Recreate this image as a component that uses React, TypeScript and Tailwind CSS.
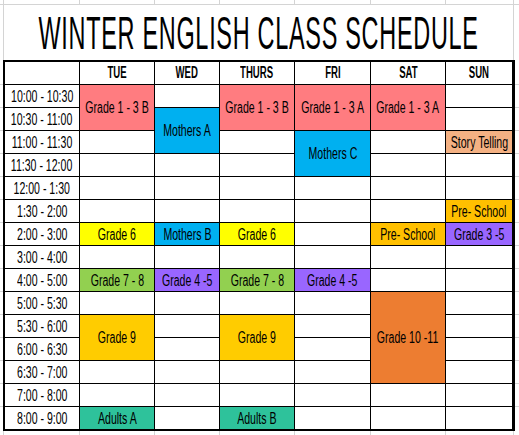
import React from "react";

type Cell = { t?: string; c?: string; s?: string };

const BG: Record<string, string> = {
  w: "bg-white",
  pink: "bg-[#ff7c80]",
  blue: "bg-[#00b0f0]",
  yel: "bg-[#ffff00]",
  grn: "bg-[#92d050]",
  pur: "bg-[#9966ff]",
  gold: "bg-[#ffcc00]",
  pre: "bg-[#ffc000]",
  teal: "bg-[#2ec29b]",
  org: "bg-[#ed7d31]",
  pch: "bg-[#f4b183]",
};

const W: Cell = { c: "w" };

const rows: { time: string; cells: Cell[] }[] = [
  {
    time: "10:00 - 10:30",
    cells: [
      { t: "Grade 1 - 3 B", c: "pink", s: "row-span-2" },
      W,
      { t: "Grade 1 - 3 B", c: "pink", s: "row-span-2" },
      { t: "Grade 1 - 3 A", c: "pink", s: "row-span-2" },
      { t: "Grade 1 - 3 A", c: "pink", s: "row-span-2" },
      W,
    ],
  },
  { time: "10:30 - 11:00", cells: [{ t: "Mothers A", c: "blue", s: "row-span-2" }, W] },
  {
    time: "11:00 - 11:30",
    cells: [W, W, { t: "Mothers C", c: "blue", s: "row-span-2" }, W, { t: "Story Telling", c: "pch" }],
  },
  { time: "11:30 - 12:00", cells: [W, W, W, W, W] },
  { time: "12:00 - 1:30", cells: [W, W, W, W, W, W] },
  { time: "1:30 - 2:00", cells: [W, W, W, W, W, { t: "Pre- School", c: "pre" }] },
  {
    time: "2:00 - 3:00",
    cells: [
      { t: "Grade 6", c: "yel" },
      { t: "Mothers B", c: "blue" },
      { t: "Grade 6", c: "yel" },
      W,
      { t: "Pre- School", c: "pre" },
      { t: "Grade 3 -5", c: "pur" },
    ],
  },
  { time: "3:00 - 4:00", cells: [W, W, W, W, W, W] },
  {
    time: "4:00 - 5:00",
    cells: [
      { t: "Grade 7 - 8", c: "grn" },
      { t: "Grade 4 -5", c: "pur" },
      { t: "Grade 7 - 8", c: "grn" },
      { t: "Grade 4 -5", c: "pur" },
      W,
      W,
    ],
  },
  { time: "5:00 - 5:30", cells: [W, W, W, W, { t: "Grade 10 -11", c: "org", s: "row-span-4" }, W] },
  {
    time: "5:30 - 6:00",
    cells: [{ t: "Grade 9", c: "gold", s: "row-span-2" }, W, { t: "Grade 9", c: "gold", s: "row-span-2" }, W, W],
  },
  { time: "6:00 - 6:30", cells: [W, W, W] },
  { time: "6:30 - 7:00", cells: [W, W, W, W, W] },
  { time: "7:00 - 8:00", cells: [W, W, W, W, W, W] },
  {
    time: "8:00 - 9:00",
    cells: [{ t: "Adults A", c: "teal" }, W, { t: "Adults B", c: "teal" }, W, W, W],
  },
];

const days = ["TUE", "WED", "THURS", "FRI", "SAT", "SUN"];

function N({ children, bold }: { children: React.ReactNode; bold?: boolean }) {
  return (
    <span
      className={`inline-block whitespace-nowrap leading-none text-[16px] text-black ${
        bold ? "font-bold scale-x-[0.6]" : "scale-x-[0.66]"
      }`}
    >
      {children}
    </span>
  );
}

function Strip({ h }: { h: string }) {
  const ws = ["w-[4px]", "w-[76px]", "w-[75px]", "w-[65px]", "w-[75px]", "w-[76px]", "w-[75px]", "w-[68px]"];
  return (
    <div className={`flex ${h}`}>
      {ws.map((w, i) => (
        <div key={i} className={`${w} shrink-0 border-r border-[#d4d4d4]`} />
      ))}
      <div className="flex-1" />
    </div>
  );
}

function Sliver({ w }: { w: string }) {
  return (
    <div className={`flex flex-col ${w}`}>
      <div className="h-[25px] shrink-0 border-b border-[#d4d4d4]" />
      {Array.from({ length: 14 }).map((_, i) => (
        <div key={i} className="h-[23px] shrink-0 border-b border-[#d4d4d4]" />
      ))}
    </div>
  );
}

export default function App() {
  return (
    <div className="w-[519px] h-[435px] overflow-hidden bg-white flex flex-col font-[family-name:'Liberation_Sans',Arial,sans-serif]">
      <div className="border-b border-[#d4d4d4]">
        <Strip h="h-[4px]" />
      </div>
      <div className="flex h-[55px] shrink-0">
        <div className="w-[4px] shrink-0 border-r border-[#d4d4d4]" />
        <div className="w-[510px] shrink-0 border-r border-[#d4d4d4] flex items-center justify-center">
          <span className="inline-block whitespace-nowrap leading-none text-[46px] tracking-[0.03em] text-black scale-x-[0.51]">
            WINTER ENGLISH CLASS SCHEDULE
          </span>
        </div>
        <div className="flex-1" />
      </div>
      <div className="flex shrink-0">
        <Sliver w="w-[3px]" />
        <div className="w-[512px] shrink-0 border-l-2 border-t-2 border-b-2 border-r-[3px] border-black">
          <div className="grid grid-cols-[74px_74px_64px_74px_75px_74px_66px] grid-rows-[repeat(16,22px)] gap-px bg-black">
            <div className="bg-white" />
            {days.map((d) => (
              <div key={d} className="bg-white flex items-center justify-center">
                <N bold>{d}</N>
              </div>
            ))}
            {rows.map((r) => (
              <React.Fragment key={r.time}>
                <div className="bg-white flex items-center justify-center pt-px">
                  <N>{r.time}</N>
                </div>
                {r.cells.map((c, i) => (
                  <div
                    key={i}
                    className={`${BG[c.c || "w"]} ${c.s || ""} flex items-center justify-center pt-px`}
                  >
                    {c.t ? <N>{c.t}</N> : null}
                  </div>
                ))}
              </React.Fragment>
            ))}
          </div>
        </div>
        <Sliver w="flex-1" />
      </div>
      <Strip h="h-[4px]" />
    </div>
  );
}
